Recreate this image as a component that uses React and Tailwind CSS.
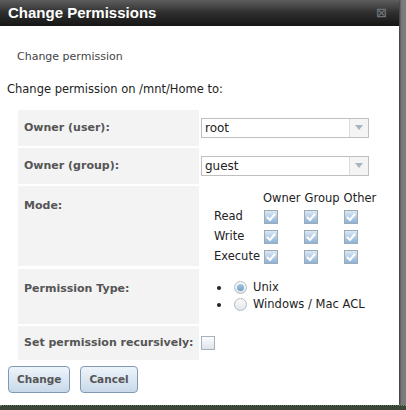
import React, { useState } from "react";

const font = { fontFamily: "'DejaVu Sans', Verdana, sans-serif" };

function Check({ checked = true }) {
  const look = checked
    ? "border-[#9eaab6] bg-gradient-to-b from-[#dbe7f3] to-[#8db2d8]"
    : "border-[#a9b1ba] bg-gradient-to-b from-[#fbfcfd] to-[#dfe4ea]";
  return (
    <span className={"inline-flex h-[14px] w-[14px] items-center justify-center border " + look}>
      {checked && (
        <svg width="10" height="9" viewBox="0 0 10 9">
          <path d="M1.5 4.5 L4 7 L8.5 1.5" fill="none" stroke="#fff" strokeWidth="2" strokeLinecap="round" />
        </svg>
      )}
    </span>
  );
}

function Radio({ on }) {
  return (
    <span className="inline-flex h-[13px] w-[13px] items-center justify-center rounded-full border border-[#b5bcc4] bg-gradient-to-b from-[#fafafa] to-[#e2e6ea]">
      {on && <span className="h-[7px] w-[7px] rounded-full bg-gradient-to-b from-[#a9c8e2] to-[#6e9fc8]" />}
    </span>
  );
}

function Select({ value }) {
  return (
    <div className="flex h-[20px] w-[168px] items-center border border-[#bfbfbf] bg-white">
      <span className="flex-1 pl-[3px] text-[12px] text-[#222]">{value}</span>
      <span className="flex h-full w-[19px] items-center justify-center border-l border-[#dcdcdc] bg-[#f4f4f4]">
        <svg width="8" height="5" viewBox="0 0 8 5">
          <path d="M0 0 L8 0 L4 5 Z" fill="#a8b4c0" />
        </svg>
      </span>
    </div>
  );
}

function Label({ children, className = "" }) {
  return (
    <div className={"bg-[#f3f3f3] pl-[6px] text-[11px] font-bold text-[#555] " + className}>
      {children}
    </div>
  );
}

export default function App() {
  const [mode] = useState([
    ["Read", [true, true, true]],
    ["Write", [true, true, true]],
    ["Execute", [true, true, true]],
  ]);

  return (
    <div className="flex h-[410px] w-[406px] flex-col overflow-hidden bg-[#7b7b7b]" style={font}>
      <div className="relative h-[405px] w-[399px] shrink-0 bg-white shadow-[1px_0_2px_rgba(0,0,0,0.6)]">
        <div className="flex h-[26px] items-center justify-between bg-gradient-to-b from-[#5e5e5e] via-[#2e2e2e] to-[#161616] pl-[8px] pr-[12px]">
          <span className="text-[15px] font-bold text-white" style={{ fontFamily: "'Liberation Sans', Arial, sans-serif" }}>
            Change Permissions
          </span>
          <span className="text-[13px] font-bold text-[#6d7278]">⊠</span>
        </div>

        <div className="pl-[17px] pt-[23px] text-[11px] text-[#444]">Change permission</div>
        <div className="pl-[7px] pt-[15px] text-[11.5px] text-[#222]">Change permission on /mnt/Home to:</div>

        <div className="ml-[18px] mt-[12px] grid grid-cols-[181px_199px] gap-y-[2px]">
          <Label className="flex h-[36px] items-center">Owner (user):</Label>
          <div className="flex items-center pl-[2px]">
            <Select value="root" />
          </div>

          <Label className="flex h-[36px] items-center">Owner (group):</Label>
          <div className="flex items-center pl-[2px]">
            <Select value="guest" />
          </div>

          <Label className="h-[80px] pt-[12px]">Mode:</Label>
          <div className="pl-[15px] pt-[4px] text-[11.5px] text-[#222]">
            <div className="flex pl-[49px]">
              <span>Owner</span>
              <span className="ml-[4px]">Group</span>
              <span className="ml-[4px]">Other</span>
            </div>
            {mode.map(([name, vals]) => (
              <div key={name} className="flex h-[20px] items-center">
                <span className="w-[50px]">{name}</span>
                <div className="flex gap-[26px]">
                  {vals.map((v, i) => (
                    <Check key={i} checked={v} />
                  ))}
                </div>
              </div>
            ))}
          </div>

          <Label className="h-[55px] pt-[12px]">Permission Type:</Label>
          <div className="pl-[18px] pt-[10px] text-[11.5px] text-[#222]">
            {["Unix", "Windows / Mac ACL"].map((t, i) => (
              <div key={t} className="flex h-[17px] items-center">
                <span className="mr-[13px] h-[4px] w-[4px] rounded-full bg-[#222]" />
                <Radio on={i === 0} />
                <span className="ml-[6px]">{t}</span>
              </div>
            ))}
          </div>

          <Label className="flex h-[34px] items-center">Set permission recursively:</Label>
          <div className="flex items-center pl-[2px]">
            <Check checked={false} />
          </div>
        </div>

        <div className="ml-[8px] mt-[6px] flex gap-[10px]">
          {["Change", "Cancel"].map((b) => (
            <button
              key={b}
              className="h-[27px] rounded-[4px] border border-[#7f9ab5] bg-gradient-to-b from-[#eef4fa] to-[#c9d9ea] px-[8px] text-[10.5px] font-bold text-[#555]"
            >
              {b}
            </button>
          ))}
        </div>
      </div>
      <div className="flex-1 border-t border-dotted border-[#7d9a6c] bg-[#3c463a]" />
    </div>
  );
}
